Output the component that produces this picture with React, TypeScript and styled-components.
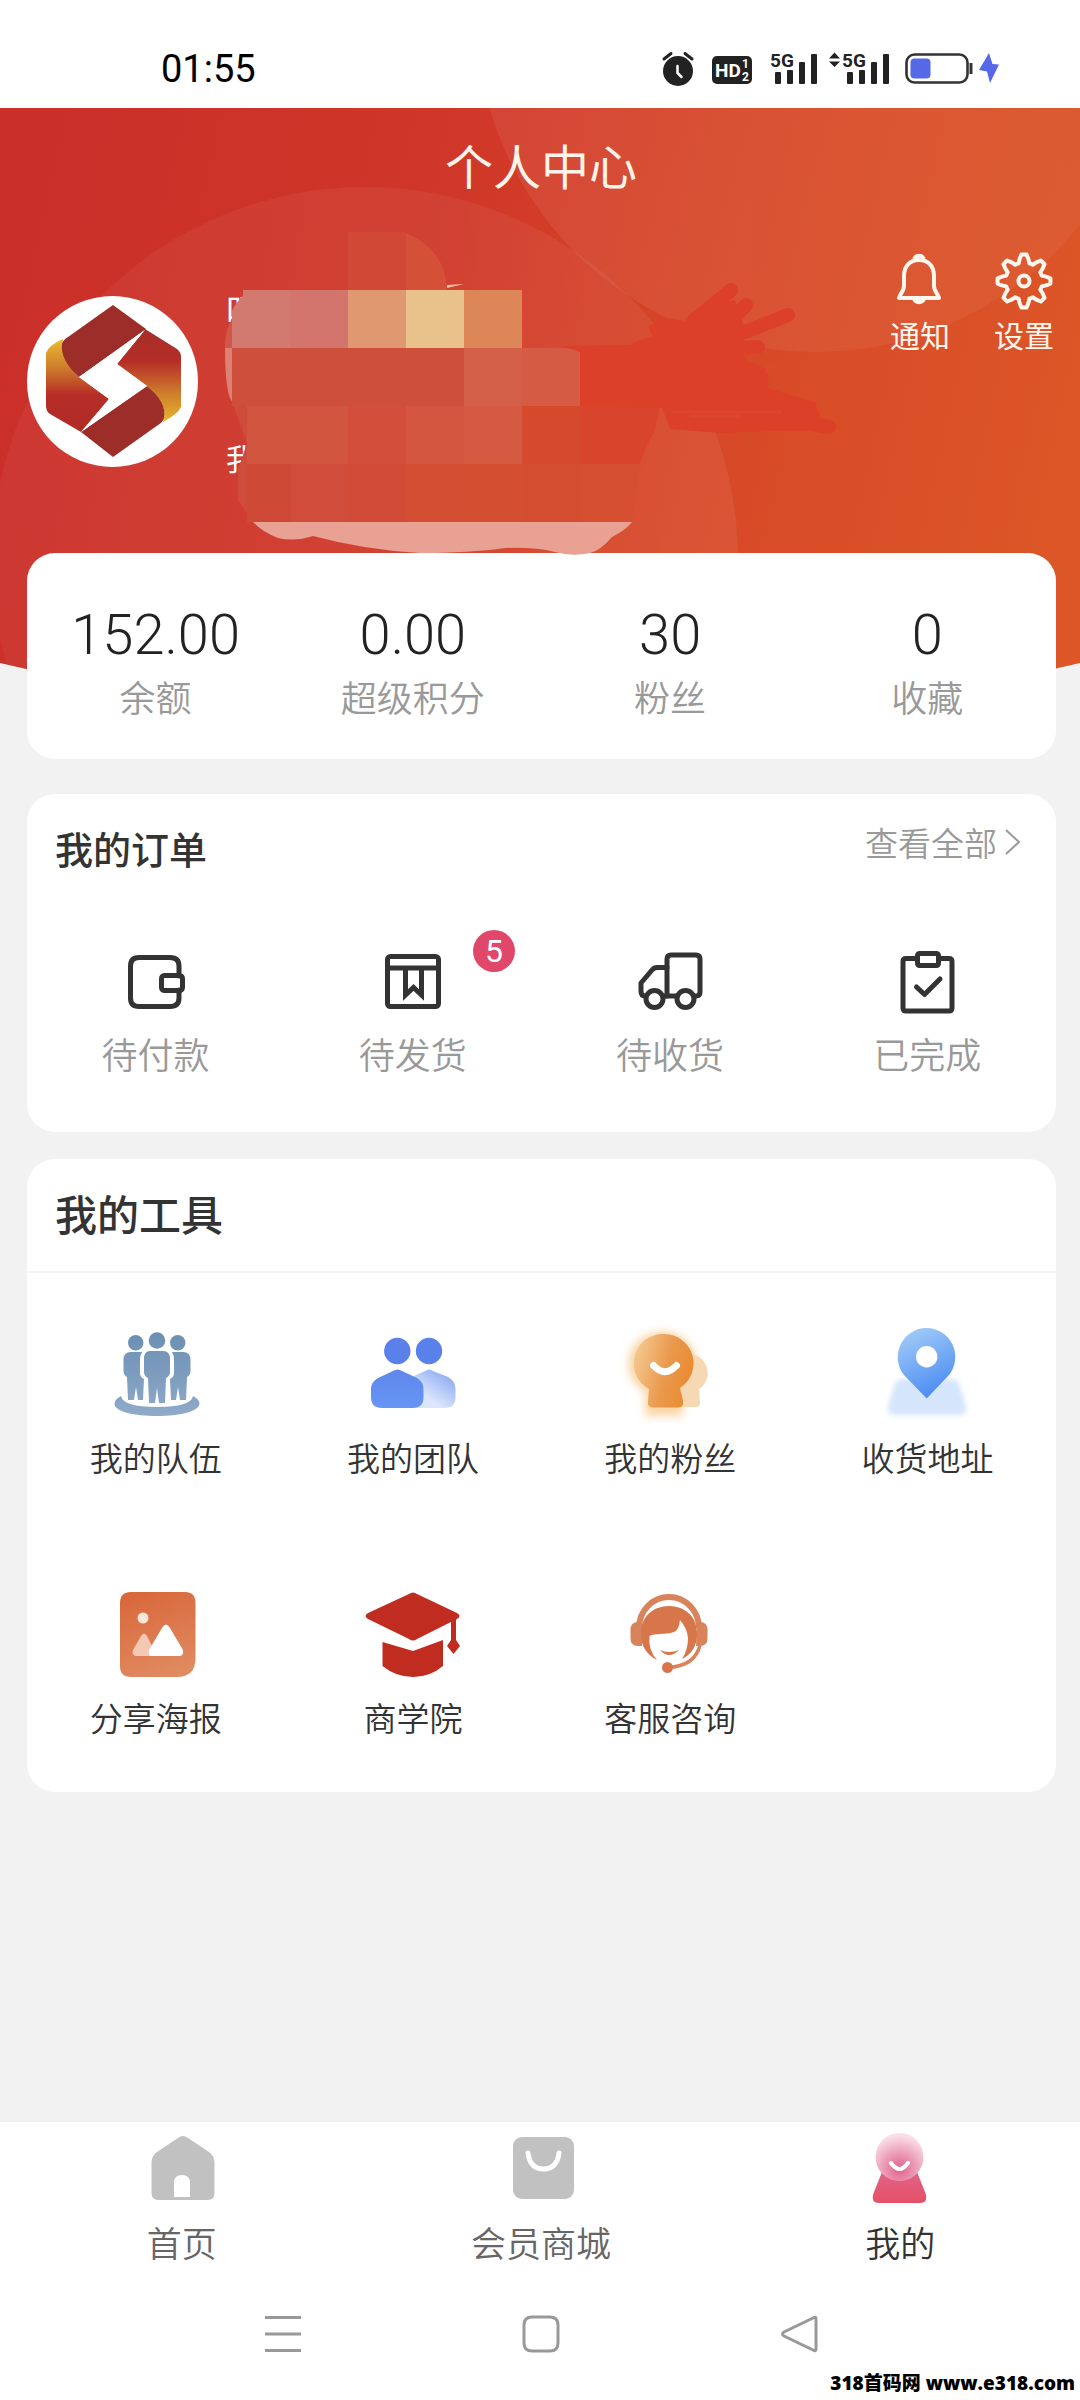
import React from 'react';
import styled, { createGlobalStyle } from 'styled-components';

const GlobalStyle = createGlobalStyle`
  * { box-sizing: border-box; }
  body {
    margin: 0;
    background: #f2f2f2;
    color: #333;
    font-family: "Noto Sans CJK SC", "Noto Sans", sans-serif;
  }
  button { border: 0; padding: 0; background: none; font: inherit; color: inherit; cursor: pointer; }
  a { color: inherit; text-decoration: none; }
  h1, h2, p { margin: 0; }
  svg { display: block; }
`;

const Page = styled.div`
  position: relative;
  display: flex;
  flex-direction: column;
  min-height: 100vh;
`;

const StatusBar = styled.header`
  display: flex;
  align-items: center;
  justify-content: space-between;
  height: 108px;
  padding: 30px 80px 0 161px;
  background: #fff;
`;

const Clock = styled.time`
  font-family: Roboto, sans-serif;
  font-size: 38px;
  line-height: 48px;
  font-weight: 400;
  color: #000;
`;

const Hero = styled.section`
  position: relative;
`;

const HeroBackdrop = styled.svg`
  position: absolute;
  top: 0;
  left: 0;
  width: 100%;
  height: 570px;
`;

const Redaction = styled.svg`
  position: absolute;
  top: 0;
  left: 0;
  width: 1080px;
  height: 570px;
  pointer-events: none;
  z-index: 2;
`;

const HeroTitle = styled.h1`
  position: relative;
  padding: 24px 0 30px 2px;
  font-size: 48px;
  line-height: 64px;
  font-weight: 400;
  text-align: center;
  color: #fff4ea;
`;

const Profile = styled.div`
  position: relative;
  display: flex;
  justify-content: space-between;
  align-items: flex-start;
  padding: 26px 26px 76px 27px;
`;

const Identity = styled.div`
  display: flex;
  align-items: center;
  gap: 28px;
  padding-top: 33px;
`;

const IdentityText = styled.div`
  display: flex;
  flex-direction: column;
  gap: 104px;
  color: #fff;
`;

const UserName = styled.p`
  font-size: 36px;
  line-height: 48px;
`;

const UserNote = styled.p`
  font-size: 30px;
  line-height: 40px;
`;

const HeroActions = styled.div`
  display: flex;
  gap: 44px;
`;

const HeroAction = styled.button`
  display: flex;
  flex-direction: column;
  align-items: center;
  gap: 4px;
  color: #fff6ee;
  font-size: 30px;
  line-height: 40px;
`;

const Content = styled.main`
  flex: 1;
  display: flex;
  flex-direction: column;
  padding: 0 24px 0 27px;
`;

const Card = styled.section<{ $gap?: number }>`
  position: relative;
  background: #fff;
  border-radius: 28px;
  margin-top: ${(p) => p.$gap ?? 0}px;
`;

const Grid = styled.div<{ $pad: string; $rowGap?: number }>`
  display: grid;
  grid-template-columns: repeat(4, 1fr);
  row-gap: ${(p) => p.$rowGap ?? 0}px;
  padding: ${(p) => p.$pad};
`;

const Stat = styled.a`
  display: flex;
  flex-direction: column;
  align-items: center;
  gap: 4px;
`;

const StatValue = styled.span`
  font-family: Roboto, sans-serif;
  font-size: 56px;
  line-height: 66px;
  font-weight: 300;
  color: #222;
`;

const Caption = styled.span`
  font-size: 36px;
  line-height: 48px;
  font-weight: 350;
  color: #999;
`;

const CardHead = styled.div<{ $ruled?: boolean }>`
  display: flex;
  justify-content: space-between;
  align-items: flex-start;
  padding: 24px 34px 0 28px;
  height: 114px;
  border-bottom: ${(p) => (p.$ruled ? '2px solid #f3f3f3' : '0')};
`;

const CardTitle = styled.h2<{ $size: number }>`
  font-size: ${(p) => p.$size}px;
  line-height: 60px;
  font-weight: 500;
`;

const MoreLink = styled.a`
  display: flex;
  align-items: center;
  gap: 7px;
  font-size: 33px;
  line-height: 48px;
  font-weight: 350;
  color: #999;
`;

const OrderItem = styled.a`
  position: relative;
  display: flex;
  flex-direction: column;
  align-items: center;
  gap: 11px;
`;

const Badge = styled.span`
  position: absolute;
  top: -16px;
  left: calc(50% + 60px);
  width: 42px;
  height: 42px;
  border-radius: 50%;
  background: #e0476a;
  color: #fff;
  font-family: Roboto, sans-serif;
  font-size: 32px;
  line-height: 42px;
  text-align: center;
`;

const Tool = styled.a`
  display: flex;
  flex-direction: column;
  align-items: center;
  gap: 12px;
  font-size: 33px;
  line-height: 44px;
  font-weight: 350;
`;

const TabBar = styled.nav`
  display: grid;
  grid-template-columns: repeat(3, 1fr);
  padding: 10px 0 34px 2px;
  background: #fff;
`;

const Tab = styled.a<{ $active?: boolean }>`
  display: flex;
  flex-direction: column;
  align-items: center;
  gap: 14px;
  font-size: 35px;
  line-height: 48px;
  font-weight: 350;
  color: ${(p) => (p.$active ? '#333' : '#666')};
`;

const SystemNav = styled.nav`
  display: flex;
  justify-content: center;
  gap: 210px;
  padding: 10px 0 42px 2px;
  background: #fff;
`;

const SystemButton = styled.button`
  width: 48px;
  height: 48px;
`;

const Watermark = styled.footer`
  position: absolute;
  right: 5px;
  bottom: 3px;
  font-size: 19px;
  line-height: 28px;
  font-weight: 800;
  color: #000;
  font-family: "Open Sans", "Noto Sans CJK SC", sans-serif;
`;

const SignalBars = ({ x }: { x: number }) => (
  <g fill="#222">
    <rect x={x} y="22" width="6" height="12" rx="1" />
    <rect x={x + 12} y="20" width="6" height="14" rx="1" />
    <rect x={x + 24} y="12" width="6" height="22" rx="1" />
    <rect x={x + 36} y="4" width="6" height="30" rx="1" />
  </g>
);

const StatusIcons = () => (
  <svg width="340" height="38" viewBox="0 0 340 38" role="img" aria-label="状态">
    <circle cx="18" cy="21" r="15" fill="#222" />
    <path d="M4 9 11 3.500M25 3.500 32 9" stroke="#222" strokeWidth="3" strokeLinecap="round" />
    <path d="M17.500 16v7l4 4" stroke="#fff" strokeWidth="2.500" fill="none" strokeLinecap="round" />
    <rect x="52" y="6" width="40" height="28" rx="5" fill="#222" />
    <g fontFamily="Roboto, sans-serif" fontWeight="700">
      <text x="55" y="27" fontSize="19" fill="#fff">HD</text>
      <text x="82" y="18" fontSize="12" fill="#fff">1</text>
      <text x="82" y="31" fontSize="12" fill="#fff">2</text>
      <text x="110" y="17" fontSize="19" fill="#222">5G</text>
      <text x="182" y="17" fontSize="19" fill="#222">5G</text>
    </g>
    <SignalBars x={115} />
    <SignalBars x={187} />
    <path d="M169 8.500 174.500 2.500 180 8.500ZM169 11.500 174.500 17 180 11.500Z" fill="#222" />
    <rect x="246.500" y="4.500" width="61" height="28" rx="8" fill="none" stroke="#333" strokeWidth="2.600" />
    <rect x="250.500" y="8.500" width="20" height="20" rx="4" fill="#5468e8" />
    <path d="M311 13v11" stroke="#333" strokeWidth="3" />
    <path d="M329 3 319 20 327 21.500 330 33 339 14.500 332.500 14Z" fill="#5468e8" />
  </svg>
);

const Backdrop = () => (
  <HeroBackdrop viewBox="0 108 1080 570" preserveAspectRatio="none" aria-hidden="true">
    <defs>
      <linearGradient id="hero" x1="0" y1="0.440" x2="1" y2="0.560">
        <stop offset="0" stopColor="#ca2f29" />
        <stop offset="0.400" stopColor="#d03828" />
        <stop offset="0.650" stopColor="#d74827" />
        <stop offset="1" stopColor="#dc5627" />
      </linearGradient>
      <linearGradient id="glowA" x1="0" y1="0" x2="1" y2="0">
        <stop offset="0" stopColor="#fff" stopOpacity="0.040" />
        <stop offset="1" stopColor="#fff" stopOpacity="0.060" />
      </linearGradient>
      <linearGradient id="glowB" x1="0" y1="0" x2="1" y2="0">
        <stop offset="0" stopColor="#fff" stopOpacity="0.070" />
        <stop offset="1" stopColor="#fff" stopOpacity="0.040" />
      </linearGradient>
      <clipPath id="heroShape">
        <path d="M0 108H1080V663Q540 790 0 663Z" />
      </clipPath>
    </defs>
    <g clipPath="url(#heroShape)">
      <rect y="108" width="1080" height="570" fill="url(#hero)" />
      <circle cx="365" cy="560" r="373" fill="url(#glowA)" />
      <circle cx="815" cy="13" r="339" fill="url(#glowB)" />
    </g>
  </HeroBackdrop>
);

const mosaic: [number, number, number, number, string][] = [
  [348, 232, 58, 58, '#d24836'],
  [290, 290, 58, 58, '#d4756d'],
  [348, 290, 58, 58, '#df9870'],
  [406, 290, 58, 58, '#e8c28a'],
  [464, 290, 58, 58, '#dd8657'],
  [232, 348, 232, 58, '#cf4f3d'],
  [464, 348, 58, 58, '#d4604a'],
  [522, 348, 58, 58, '#d55b44'],
  [247, 406, 101, 58, '#d1553f'],
  [348, 406, 58, 58, '#d34f3b'],
  [406, 406, 58, 58, '#d55640'],
  [464, 406, 58, 58, '#d65a42'],
  [522, 406, 60, 58, '#d5492c'],
  [247, 464, 44, 58, '#ce4a37'],
  [291, 464, 57, 58, '#d04d3c'],
  [348, 464, 58, 58, '#d14b37'],
  [406, 464, 58, 58, '#d34e33'],
  [464, 464, 58, 58, '#d44f32'],
  [522, 464, 60, 58, '#d54d30'],
];

const RedactionMarks = () => (
  <Redaction viewBox="0 108 1080 570" aria-hidden="true">
    <path d="M406 233Q446 250 447 290H406Z" fill="#d45036" />
    <path d="M447 285 464 284 447 288Z" fill="#f6c3a4" />
    <path d="M580 464V406H660L655 430Q646 445 640 464Z" fill="#d8452c" />
    <path d="M580 464H640L632 522H580Z" fill="#d54f30" />
    <path d="M243 290H290V348H232V311Q236 302 243 296Z" fill="#d37a70" />
    <path d="M232 318Q224 334 225 348H232Z" fill="#d15748" />
    <path d="M225 348h8v55q-8-8-8-55Z" fill="#dd8175" />
    <path d="M232 402 247 443 238 470V500L253 522H300V402Z" fill="#cf4c3a" />
    {mosaic.map(([x, y, w, h, fill]) => (
      <rect key={`${x}-${y}`} x={x} y={y} width={w} height={h} fill={fill} />
    ))}
    <path
      d="M253 522H632Q626 530 612 537Q600 551 590 553Q573 557 555 552Q535 547 505 548Q470 553 420 553Q365 550 313 536Q295 542 278 538Q262 532 253 522Z"
      fill="#e8a192"
    />
    <g stroke="#dd4029" strokeLinecap="round" fill="none" strokeWidth="14">
      <path d="M692 322 731 290M720 335 746 305M730 338 788 315M735 348 758 347" />
      <path d="M760 415 829 427" />
    </g>
    <path
      d="M562 346 630 345 640 340 652 336 648 326 670 318 690 322 702 310 735 300 745 330 735 342 746 360 768 370 768 388 790 395 815 402 820 418 828 430 780 431 720 433 670 429 662 408 580 406V352Z"
      fill="#dd4029"
    />
    <path d="M765 368H800M772 378H790" stroke="#d94a28" strokeWidth="10" />
    <path d="M672 412H782M690 416H740" stroke="#d9482c" strokeWidth="3" />
  </Redaction>
);

const Avatar = () => (
  <svg width="171" height="171" viewBox="0 0 171 171" role="img" aria-label="头像">
    <defs>
      <linearGradient id="goldL" x1="0" y1="0" x2="0" y2="1">
        <stop offset="0" stopColor="#ebbb30" />
        <stop offset="0.300" stopColor="#cf7f2c" />
        <stop offset="0.600" stopColor="#b62d27" />
        <stop offset="1" stopColor="#b02a26" />
      </linearGradient>
      <linearGradient id="goldR" x1="0" y1="0" x2="0" y2="1">
        <stop offset="0" stopColor="#a52e29" />
        <stop offset="0.350" stopColor="#b62d27" />
        <stop offset="0.700" stopColor="#cf7f2c" />
        <stop offset="1" stopColor="#e8b62f" />
      </linearGradient>
    </defs>
    <circle cx="85.500" cy="85.500" r="85.500" fill="#fff" />
    <path d="M36 43Q22 49 19 57V110Q19 115 23 118L54 136 82 103 52 81Q34 64 36 43Z" fill="url(#goldL)" />
    <path d="M118 33 150 53Q154 56 154 61V111Q151 118 136 126Q142 108 120 90L90 68Z" fill="url(#goldR)" />
    <path d="M86 9 119 33 52 81Q33 64 35 48Q36 44 41 41Z" fill="#9d2d29" />
    <path d="M120 90Q140 106 137 122Q136 126 131 129L86 161 54 136Z" fill="#9d2d29" />
    <path d="M118 34 52 81 82 103 54 136 120 90 90 68Z" fill="#fff" />
  </svg>
);

const gearPath = (() => {
  const points: string[] = [];
  for (let i = 0; i < 64; i += 1) {
    const a = (i / 64) * Math.PI * 2;
    const wave = Math.max(-1, Math.min(1, 1.5 * Math.cos(a * 8)));
    const r = 22.5 + 4 * wave;
    points.push(`${(30 + r * Math.sin(a)).toFixed(1)} ${(29 - r * Math.cos(a)).toFixed(1)}`);
  }
  return `M${points.join('L')}Z`;
})();

const BellIcon = () => (
  <svg width="60" height="58" viewBox="1 0 60 58" fill="none" stroke="#fff6ee" strokeWidth="4" strokeLinejoin="round" aria-hidden="true">
    <path d="M25 7a5.500 5.500 0 0 1 10 0" />
    <path d="M30 8C20 8 15 15 15 24V34C15 39 11 42 10 46H50C49 42 45 39 45 34V24C45 15 40 8 30 8Z" />
    <path d="M25 47a5.500 5.500 0 0 0 10 0" />
  </svg>
);

const GearIcon = () => (
  <svg width="60" height="58" viewBox="0 0 60 58" fill="none" stroke="#fff6ee" strokeWidth="4" strokeLinejoin="round" aria-hidden="true">
    <path d={gearPath} />
    <circle cx="30" cy="29" r="5.500" />
  </svg>
);

const LineIcon = ({ children }: { children: React.ReactNode }) => (
  <svg width="72" height="72" viewBox="1 0 72 72" fill="none" stroke="#333" strokeWidth="5" strokeLinejoin="round" strokeLinecap="round" aria-hidden="true">
    {children}
  </svg>
);

const orders = [
  {
    label: '待付款',
    icon: (
      <>
        <path d="M60 30V20Q60 11.500 51 11.500H20Q11.500 11.500 11.500 20V52Q11.500 60.500 20 60.500H51Q60 60.500 60 52V44" />
        <rect x="42.500" y="29.500" width="21" height="15" rx="3" />
      </>
    ),
  },
  {
    label: '待发货',
    badge: 5,
    icon: (
      <>
        <rect x="11.500" y="10.500" width="51" height="50" rx="3" />
        <path d="M11.500 22H62.500M29.500 22V49L37.500 41.500 45.500 49V22" strokeLinejoin="miter" />
      </>
    ),
  },
  {
    label: '待收货',
    icon: (
      <>
        <path d="M34 50V13Q34 9 38 9H63Q67 9 67 13V46Q67 50 63 50H61" />
        <path d="M12 50Q8 50 8 45V37L19 24Q21 21.500 24 21.500H34M30 50H44" />
        <circle cx="21.500" cy="53" r="8.500" />
        <circle cx="52.500" cy="53" r="8.500" />
      </>
    ),
  },
  {
    label: '已完成',
    icon: (
      <>
        <path d="M27 12.500H16Q13 12.500 13 15.500V62Q13 65 16 65H59Q62 65 62 62V15.500Q62 12.500 59 12.500H49" />
        <rect x="27.500" y="7.500" width="21" height="12" rx="2" />
        <path d="M26.500 41 34.500 48.500 50 33" />
      </>
    ),
  },
];

const ColorIcon = ({ children }: { children: React.ReactNode }) => (
  <svg width="96" height="96" viewBox="1 1 96 96" aria-hidden="true" overflow="visible">
    {children}
  </svg>
);

const tools = [
  {
    label: '我的队伍',
    icon: (
      <>
        <defs>
          <linearGradient id="steel" gradientUnits="userSpaceOnUse" x1="0" y1="5" x2="0" y2="90">
            <stop offset="0" stopColor="#6a8fb2" />
            <stop offset="1" stopColor="#8faaca" />
          </linearGradient>
        </defs>
        <g fill="url(#steel)">
          <circle cx="50" cy="14.500" r="8.300" />
          <circle cx="28.700" cy="16.700" r="7.700" />
          <circle cx="70.700" cy="16.700" r="7.700" />
          <path d="M43 25H56Q63 25 63 33V46Q63 50 59 52L58 77H52L50 62 48 77H42L41 52Q37 50 37 46V33Q37 25 43 25Z" />
          <path d="M24 26H35Q33 29 33 34V48Q34 52 37 53L36 74H31L29 61 27 74H21L20 51Q16.500 49 16.500 45V34Q16.500 26 24 26Z" />
          <path d="M76 26H65Q67 29 67 34V48Q66 52 63 53L64 74H69L71 61 73 74H79L80 51Q83.500 49 83.500 45V34Q83.500 26 76 26Z" />
          <path d="M14 70Q16 81 50 81T86 70Q93 74 92.500 78C91 86 72 90 50 90S8 86 7.500 78Q7 74 14 70Z" />
        </g>
      </>
    ),
  },
  {
    label: '我的团队',
    icon: (
      <>
        <defs>
          <linearGradient id="blueBody" x1="0" y1="0" x2="0" y2="1">
            <stop offset="0" stopColor="#5f88ea" />
            <stop offset="1" stopColor="#6695f5" />
          </linearGradient>
          <linearGradient id="blueBack" x1="1" y1="0" x2="0.400" y2="0.800">
            <stop offset="0" stopColor="#7b9ef0" />
            <stop offset="1" stopColor="#dce6fd" />
          </linearGradient>
        </defs>
        <path d="M61 45Q65 42 69 45L84 51Q91.500 55 91.500 63V71Q91.500 82 81 82H50V50Z" fill="url(#blueBack)" />
        <path d="M29 45Q33.500 42 38 45L53 52Q59.500 56 59.500 63V71Q59.500 82 49 82H18Q7 82 7 71V63Q7 56 14 52Z" fill="url(#blueBody)" />
        <circle cx="33.300" cy="25" r="13.200" fill="#5a80ea" />
        <circle cx="65" cy="25" r="13.200" fill="#5a80ea" />
      </>
    ),
  },
  {
    label: '我的粉丝',
    icon: (
      <>
        <defs>
          <linearGradient id="amber" x1="0" y1="0.300" x2="1" y2="0.600">
            <stop offset="0" stopColor="#f5c890" />
            <stop offset="0.550" stopColor="#ea994d" />
            <stop offset="1" stopColor="#e98a2e" />
          </linearGradient>
          <filter id="softAmber" x="-30%" y="-30%" width="160%" height="160%">
            <feGaussianBlur stdDeviation="4" />
          </filter>
        </defs>
        <path d="M41 6A32 32 0 0 1 62 64V90H24V66A32 32 0 0 1 41 6Z" fill="#fad5a6" filter="url(#softAmber)" />
        <path d="M68 28A19 19 0 0 1 78 63L79 77Q79 81 74 81H58V28Z" fill="#f6d8b2" />
        <path d="M43.300 8A29.300 29.300 0 0 1 59 62L62 75Q63 81.500 57 81.500H32Q26 81.500 27 75L28 63A29.300 29.300 0 0 1 43.300 8Z" fill="url(#amber)" />
        <path d="M32.500 39.500Q44 52 55.500 39.500" stroke="#fff" strokeWidth="7" fill="none" strokeLinecap="round" />
      </>
    ),
  },
  {
    label: '收货地址',
    icon: (
      <>
        <defs>
          <linearGradient id="pin" x1="0.200" y1="0" x2="0.600" y2="1">
            <stop offset="0" stopColor="#a3ccf8" />
            <stop offset="1" stopColor="#4a8bf3" />
          </linearGradient>
          <filter id="softBlue" x="-20%" y="-20%" width="140%" height="140%">
            <feGaussianBlur stdDeviation="2.500" />
          </filter>
        </defs>
        <path d="M24 53H74Q79 53 81 58L88 80Q90 89 81 89H17Q8 89 10 80L17 58Q19 53 24 53Z" fill="#d5e5fc" filter="url(#softBlue)" />
        <path d="M48.700 2A29 29 0 0 1 71 49L48.700 72.500 26 49A29 29 0 0 1 48.700 2Z" fill="url(#pin)" />
        <circle cx="48.700" cy="30.700" r="10.700" fill="#fff" />
      </>
    ),
  },
  {
    label: '分享海报',
    icon: (
      <>
        <defs>
          <linearGradient id="poster" x1="0.300" y1="0" x2="0.600" y2="1">
            <stop offset="0" stopColor="#d9683c" />
            <stop offset="1" stopColor="#e08a60" />
          </linearGradient>
        </defs>
        <path d="M24 6H78Q88.500 6 88.500 17V72Q88.500 91 70 91H24Q13 91 13 80V17Q13 6 24 6Z" fill="url(#poster)" />
        <circle cx="36" cy="32" r="5.500" fill="#fbe6dc" />
        <path d="M34 50Q37 45 40 50L50 70H29Q24 69 26 64Z" fill="#f3c9b4" />
        <path d="M55 42Q59 35 63 42L76 64Q77 70 72 70H44Q41 69 42 64Z" fill="#fff" />
      </>
    ),
  },
  {
    label: '商学院',
    icon: (
      <g fill="#c02c20">
        <path d="M45 8Q49 5 53 8L93 27Q98 30 93 33L53 53Q49 56 45 53L4 33Q-1 30 4 27Z" />
        <path d="M18.500 56 49 65 79 54V80Q66 91 49 91T18.500 80Z" />
        <path d="M87 30H92V54L96 60 89.500 68 83 60 87 54Z" />
      </g>
    ),
  },
  {
    label: '客服咨询',
    icon: (
      <>
        <path d="M18 42A30 31 0 0 1 78 42" fill="none" stroke="#d8835a" strokeWidth="6" />
        <path d="M20 36H21V60H17Q9.500 60 9.500 52V44Q9.500 36 17 36ZM76 36H79Q86.500 36 86.500 44V52Q86.500 60 79 60H75Z" fill="#d8835a" />
        <path d="M20 49C19 31 32 20 48 20S77 31 76 49C76 60 70 69 61 73Q67 64 67 52Q66 42 59 34Q58 44 53 46C44 49 34 47 28.500 50Q27 64 36 74C26 69 20 60 20 49Z" fill="#d8764b" />
        <path d="M39 64Q48 68 58 64Q48 74 39 64Z" fill="#d8764b" />
        <path d="M79 59Q74 80 47 81.500" fill="none" stroke="#d8835a" strokeWidth="3.500" />
        <circle cx="46.500" cy="81.500" r="5.500" fill="#d8764b" />
      </>
    ),
  },
];

const tabs = [
  {
    label: '首页',
    icon: (
      <>
        <path d="M32 6Q37 2 42 6L63 20Q68.500 24 68.500 31V61Q68.500 68 62 68H12Q5.500 68 5.500 61V31Q5.500 24 11 20Z" fill="#c1c1c1" />
        <path d="M28 65V51Q28 43 36 43T44 51V65Z" fill="#fff" />
      </>
    ),
  },
  {
    label: '会员商城',
    icon: (
      <>
        <rect x="8" y="5" width="61" height="62" rx="9" fill="#c1c1c1" />
        <path d="M23 21Q25 37 38.500 37T54 21" stroke="#fff" strokeWidth="5" fill="none" strokeLinecap="round" />
      </>
    ),
  },
  {
    label: '我的',
    active: true,
    icon: (
      <>
        <defs>
          <radialGradient id="face" cx="0.500" cy="0.750" r="0.700">
            <stop offset="0" stopColor="#e0608c" />
            <stop offset="0.500" stopColor="#ec9fba" />
            <stop offset="1" stopColor="#fadfe8" />
          </radialGradient>
          <linearGradient id="torso" x1="0" y1="0" x2="0" y2="1">
            <stop offset="0" stopColor="#e0638a" />
            <stop offset="1" stopColor="#e65064" />
          </linearGradient>
        </defs>
        <path d="M18 40H53L61 60Q65 71 56 71H15Q6 71 10 60Z" fill="url(#torso)" />
        <circle cx="35.500" cy="25" r="24" fill="url(#face)" />
        <path d="M27 31Q35.500 43 44 31" stroke="#fff" strokeWidth="4" fill="none" strokeLinecap="round" />
      </>
    ),
  },
];

const stats = [
  ['152.00', '余额'],
  ['0.00', '超级积分'],
  ['30', '粉丝'],
  ['0', '收藏'],
];

const systemKeys = [
  { label: '菜单', d: 'M6 7.500H42M6 24H42M6 40.500H42' },
  { label: '主页', d: 'M15 7H33Q41 7 41 15V33Q41 41 33 41H15Q7 41 7 33V15Q7 7 15 7Z' },
  { label: '返回', d: 'M41 9V39Q41 42 38 40L9 26Q6 24 9 22L38 8Q41 6 41 9Z' },
];

export default function App() {
  return (
    <>
      <GlobalStyle />
      <Page>
        <StatusBar>
          <Clock>01:55</Clock>
          <StatusIcons />
        </StatusBar>

        <Hero>
          <Backdrop />
          <HeroTitle>个人中心</HeroTitle>
          <Profile>
            <Identity>
              <Avatar />
              <IdentityText>
                <UserName>叮</UserName>
                <UserNote>我</UserNote>
              </IdentityText>
            </Identity>
            <HeroActions>
              <HeroAction type="button">
                <BellIcon />
                通知
              </HeroAction>
              <HeroAction type="button">
                <GearIcon />
                设置
              </HeroAction>
            </HeroActions>
          </Profile>
          <RedactionMarks />
        </Hero>

        <Content>
          <Card>
            <Grid $pad="49px 0 39px">
              {stats.map(([value, label]) => (
                <Stat key={label} href="#">
                  <StatValue>{value}</StatValue>
                  <Caption>{label}</Caption>
                </Stat>
              ))}
            </Grid>
          </Card>

          <Card $gap={35}>
            <CardHead>
              <CardTitle $size={38}>我的订单</CardTitle>
              <MoreLink href="#">
                查看全部
                <svg width="18" height="28" viewBox="0 0 18 28" fill="none" stroke="#999" strokeWidth="2" aria-hidden="true">
                  <path d="M2 2 15 14 2 26" />
                </svg>
              </MoreLink>
            </CardHead>
            <Grid $pad="38px 0 55px">
              {orders.map((o) => (
                <OrderItem key={o.label} href="#">
                  <LineIcon>{o.icon}</LineIcon>
                  {o.badge && <Badge>{o.badge}</Badge>}
                  <Caption>{o.label}</Caption>
                </OrderItem>
              ))}
            </Grid>
          </Card>

          <Card $gap={27}>
            <CardHead $ruled>
              <CardTitle $size={42}>我的工具</CardTitle>
            </CardHead>
            <Grid $pad="54px 0 53px" $rowGap={108}>
              {tools.map((t) => (
                <Tool key={t.label} href="#">
                  <ColorIcon>{t.icon}</ColorIcon>
                  {t.label}
                </Tool>
              ))}
            </Grid>
          </Card>
        </Content>

        <TabBar>
          {tabs.map((t) => (
            <Tab key={t.label} href="#" $active={t.active}>
              <svg width="72" height="72" viewBox="0 0 72 72" aria-hidden="true">
                {t.icon}
              </svg>
              {t.label}
            </Tab>
          ))}
        </TabBar>
        <SystemNav>
          {systemKeys.map((k) => (
            <SystemButton key={k.label} type="button" aria-label={k.label}>
              <svg width="48" height="48" viewBox="0 0 48 48" fill="none" stroke="#999" strokeWidth="3" aria-hidden="true">
                <path d={k.d} />
              </svg>
            </SystemButton>
          ))}
        </SystemNav>
        <Watermark>318首码网 www.e318.com</Watermark>
      </Page>
    </>
  );
}
